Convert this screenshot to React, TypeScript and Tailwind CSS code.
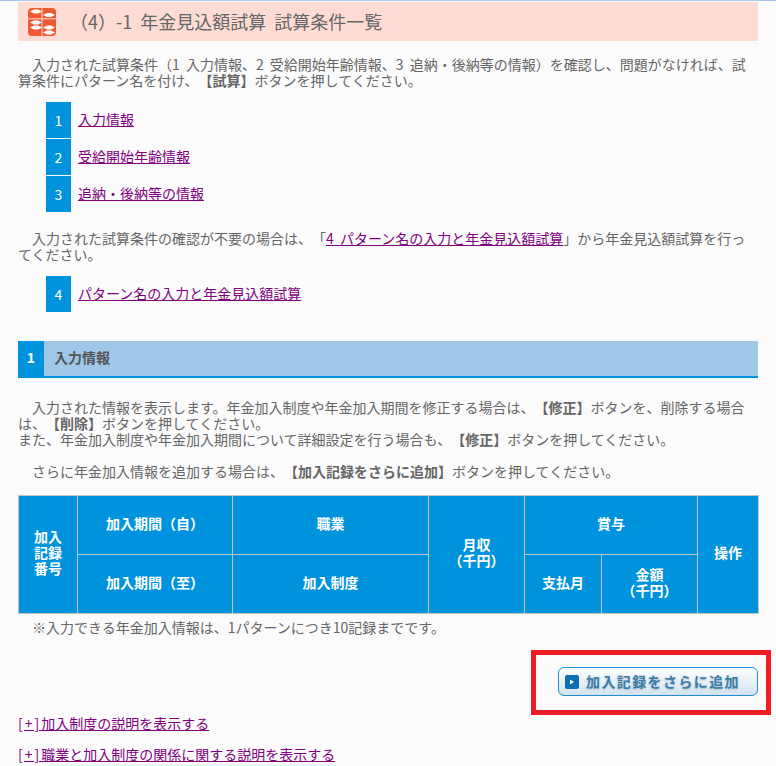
const fontStack = 'font-["Noto_Sans_CJK_JP","Liberation_Sans",sans-serif]';

function AbacusIcon() {
  const beads = [
    [8, 3.5], [8, 14.5], [8, 19.5], [21, 7], [21, 19.5], [21, 24.5],
  ];
  return (
    <svg width="28" height="28" viewBox="0 0 28 28" className="shrink-0">
      <rect width="28" height="28" rx="4" fill="#ee5a33" />
      <path d="M14 0V28M0 10.8H28" stroke="#fff" strokeWidth="0.8" />
      {beads.map(([x, y]) => (
        <path key={`${x}-${y}`} d={`M${x - 6} ${y}L${x - 2} ${y - 2}H${x + 2}L${x + 6} ${y}L${x + 2} ${y + 2}H${x - 2}Z`} fill="#fff" />
      ))}
    </svg>
  );
}

function NavRow({ num, label }: { num: string; label: string }) {
  return (
    <li className="flex h-9 items-center">
      <span className="flex h-9 w-[25px] items-center justify-center bg-[#0093dd] pb-px text-white">{num}</span>
      <a href="#" className="ml-[7px] pb-[2px] text-[#800080] underline">{label}</a>
    </li>
  );
}

function Th({ children, className = '', ...rest }: React.ThHTMLAttributes<HTMLTableCellElement>) {
  return (
    <th {...rest} className={`border border-[#c4c4c4] bg-[#0093dd] p-0 pb-[5px] text-center align-middle text-[14px] leading-[16px] font-bold text-white ${className}`}>
      {children}
    </th>
  );
}

function MoreLink({ label }: { label: string }) {
  return (
    <a href="#" className="text-[#800080] underline">
      <span className="tracking-[2px]">[+]</span>
      {label}
    </a>
  );
}

export default function App() {
  return (
    <div className={`relative h-[766px] overflow-hidden border-t border-[#a9c4e4] bg-[#fbfbfb] text-[14px] leading-[16px] text-[#666] [text-spacing-trim:space-all] ${fontStack}`}>
      <div className="mx-[18px] pt-px">
        {/* page title */}
        <header className="flex h-[39px] items-center bg-[#ffdcd3] pl-[10px]">
          <AbacusIcon />
          <h1 className="mb-[2px] ml-[14px] text-[18px] font-normal [word-spacing:4px]">（4）-1 年金見込額試算 試算条件一覧</h1>
        </header>

        <p className="mt-[15px] pr-[6px] indent-[14px] [word-spacing:3px]">
          入力された試算条件（1 入力情報、2 受給開始年齢情報、3 追納・後納等の情報）を確認し、問題がなければ、試算条件にパターン名を付け、<b>【試算】</b>ボタンを押してください。
        </p>

        <ul className="mt-[14px] ml-7 flex flex-col gap-px">
          <NavRow num="1" label="入力情報" />
          <NavRow num="2" label="受給開始年齢情報" />
          <NavRow num="3" label="追納・後納等の情報" />
        </ul>

        <p className="mt-[18px] pr-[6px] indent-[14px] [word-spacing:3px]">
          入力された試算条件の確認が不要の場合は、「<a href="#" className="text-[#800080] underline">4 パターン名の入力と年金見込額試算</a>」から年金見込額試算を行ってください。
        </p>

        <ul className="mt-[14px] ml-7">
          <NavRow num="4" label="パターン名の入力と年金見込額試算" />
        </ul>

        {/* section heading */}
        <h2 className="mt-[29px] flex h-[37px] items-stretch border-b-2 border-[#0093dd] bg-[#9fc7e8] font-bold">
          <span className="flex w-[26px] items-center justify-center bg-[#0093dd] pb-[4px] text-white">1</span>
          <span className="ml-[10px] flex items-center pb-[4px] text-[#555]">入力情報</span>
        </h2>

        <p className="mt-[21px] pr-[6px] indent-[14px]">
          入力された情報を表示します。年金加入制度や年金加入期間を修正する場合は、<b>【修正】</b>ボタンを、削除する場合は、<b>【削除】</b>ボタンを押してください。
        </p>
        <p>また、年金加入制度や年金加入期間について詳細設定を行う場合も、<b>【修正】</b>ボタンを押してください。</p>

        <p className="mt-4 indent-[14px]">
          さらに年金加入情報を追加する場合は、<b>【加入記録をさらに追加】</b>ボタンを押してください。
        </p>

        <table className="mt-4 w-[740px] table-fixed border-collapse">
          <colgroup>
            <col className="w-[59px]" />
            <col className="w-[155px]" />
            <col className="w-[196px]" />
            <col className="w-[96px]" />
            <col className="w-[77px]" />
            <col className="w-[96px]" />
            <col className="w-[61px]" />
          </colgroup>
          <thead>
            <tr className="h-[59px]">
              <Th rowSpan={2}>加入<br />記録<br />番号</Th>
              <Th>加入期間（自）</Th>
              <Th>職業</Th>
              <Th rowSpan={2}>月収<br />（千円）</Th>
              <Th colSpan={2}>賞与</Th>
              <Th rowSpan={2}>操作</Th>
            </tr>
            <tr className="h-[59px]">
              <Th>加入期間（至）</Th>
              <Th>加入制度</Th>
              <Th>支払月</Th>
              <Th>金額<br />（千円）</Th>
            </tr>
          </thead>
        </table>

        <p className="mt-[5px] ml-[14px]">※入力できる年金加入情報は、1パターンにつき10記録までです。</p>

        <div className="mt-[32px] flex justify-end">
          <button className="flex h-[29px] w-[200px] items-center rounded-[6px] border border-[#1c8fd0] bg-gradient-to-b from-white to-[#d3e2ee] pl-[6px] text-[14px] font-bold tracking-[1.4px] text-[#3d7ca6] [text-shadow:0_1px_2px_#a9bfd0]">
            <span className="flex h-[14px] w-[14px] items-center justify-center rounded-[2px] bg-[#0a6fb0]">
              <svg width="6" height="6" viewBox="0 0 6 6"><path d="M1 0.5L5 3L1 5.5Z" fill="#fff" /></svg>
            </span>
            <span className="ml-[7px] pb-[2px]">加入記録をさらに追加</span>
          </button>
        </div>

        <p className="mt-[19px]"><MoreLink label="加入制度の説明を表示する" /></p>
        <p className="mt-[15px]"><MoreLink label="職業と加入制度の関係に関する説明を表示する" /></p>
      </div>

      {/* red annotation frame */}
      <div className="absolute top-[649px] left-[531px] h-[65px] w-[240px] border-[5px] border-[#ee1c25]" />
    </div>
  );
}
